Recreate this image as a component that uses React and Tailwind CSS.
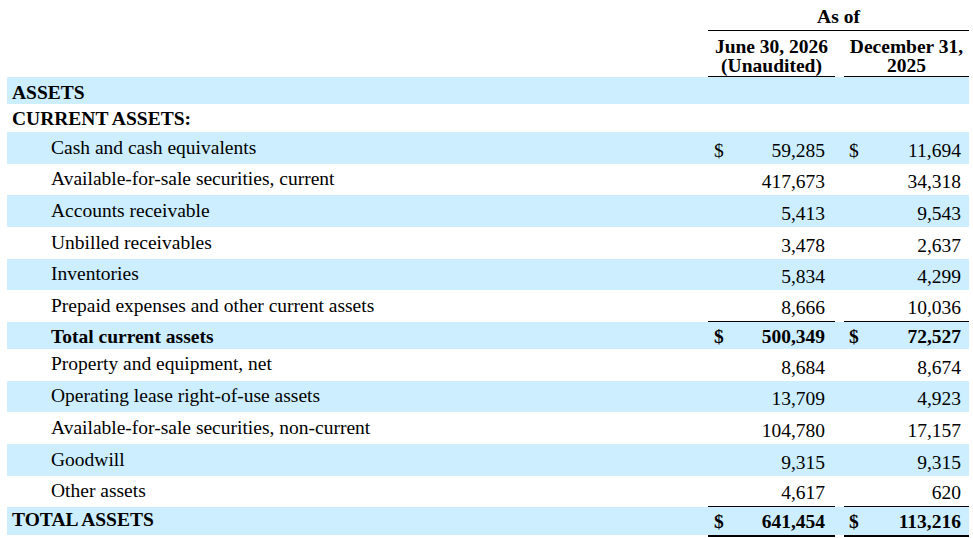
import React from 'react';

const ROWS = [
  { label: 'ASSETS', section: true, bg: true, h: 'h-[27px]', pb: 'pb-0' },
  { label: 'CURRENT ASSETS:', section: true, h: 'h-[28px]', pb: 'pb-[2px]' },
  { label: 'Cash and cash equivalents', a: '59,285', b: '11,694', dollar: true, bg: true, h: 'h-[32px]' },
  { label: 'Available-for-sale securities, current', a: '417,673', b: '34,318', h: 'h-[31px]' },
  { label: 'Accounts receivable', a: '5,413', b: '9,543', bg: true, h: 'h-[32px]' },
  { label: 'Unbilled receivables', a: '3,478', b: '2,637', h: 'h-[32px]' },
  { label: 'Inventories', a: '5,834', b: '4,299', bg: true, h: 'h-[31px]' },
  { label: 'Prepaid expenses and other current assets', a: '8,666', b: '10,036', h: 'h-[32px]', rule: true },
  { label: 'Total current assets', a: '500,349', b: '72,527', bold: true, dollar: true, bg: true, h: 'h-[27px]', pb: 'pb-[1px]', vpb: 'pb-[1px]' },
  { label: 'Property and equipment, net', a: '8,684', b: '8,674', h: 'h-[32px]', pb: 'pb-[6px]' },
  { label: 'Operating lease right-of-use assets', a: '13,709', b: '4,923', bg: true, h: 'h-[31px]' },
  { label: 'Available-for-sale securities, non-current', a: '104,780', b: '17,157', h: 'h-[32px]' },
  { label: 'Goodwill', a: '9,315', b: '9,315', bg: true, h: 'h-[32px]' },
  { label: 'Other assets', a: '4,617', b: '620', h: 'h-[31px]', rule: true },
  { label: 'TOTAL ASSETS', a: '641,454', b: '113,216', section: true, bold: true, dollar: true, bg: true, h: 'h-[28px]', pb: 'pb-[4px]' },
];

function ValueCell({ value, dollar, bold, rule, width, pl, pr, pb }) {
  return (
    <div className={`${width} flex items-end justify-between ${pl} ${pr} ${pb} ${rule ? 'border-b border-black' : ''} ${bold ? 'font-bold' : ''}`}>
      <span>{dollar ? '$' : ''}</span>
      <span>{value}</span>
    </div>
  );
}

function Row({ row }) {
  const labelPb = row.pb ?? 'pb-[5px]';
  const valuePb = row.vpb ?? 'pb-[2px]';
  return (
    <div className={`flex ${row.h} ${row.bg ? 'bg-[#cceeff]' : 'bg-white'}`}>
      <div
        className={`flex-1 flex items-end whitespace-nowrap ${labelPb} ${row.section ? 'pl-[5px]' : 'pl-[44px]'} ${row.bold || row.section ? 'font-bold' : ''}`}
      >
        {row.label}
      </div>
      {row.a !== undefined ? (
        <>
          <ValueCell value={row.a} dollar={row.dollar} bold={row.bold} rule={row.rule} width="w-[127px]" pl="pl-[6px]" pr="pr-[10px]" pb={valuePb} />
          <div className="w-[9px]" />
          <ValueCell value={row.b} dollar={row.dollar} bold={row.bold} rule={row.rule} width="w-[125px]" pl="pl-[5px]" pr="pr-[8px]" pb={valuePb} />
        </>
      ) : null}
    </div>
  );
}

export default function App() {
  return (
    <div
      className="w-[973px] h-[538px] overflow-hidden bg-white text-black text-[19.5px] leading-[22px] pl-[7px] pr-[4px]"
      style={{ fontFamily: '"Liberation Serif", "Times New Roman", serif' }}
    >
      {/* header */}
      <div className="flex">
        <div className="flex-1" />
        <div className="w-[261px] h-[31px] flex items-end justify-center pb-[2px] border-b border-black font-bold">
          As of
        </div>
      </div>
      <div className="flex h-[46px] font-bold leading-[19px]">
        <div className="flex-1" />
        <div className="w-[127px] flex flex-col items-center justify-end pb-[1px] border-b border-black text-center whitespace-nowrap">
          <span>June 30, 2026</span>
          <span>(Unaudited)</span>
        </div>
        <div className="w-[9px]" />
        <div className="w-[125px] flex flex-col items-center justify-end pb-[1px] border-b border-black text-center whitespace-nowrap">
          <span>December 31,</span>
          <span>2025</span>
        </div>
      </div>

      {ROWS.map((row) => (
        <Row key={row.label} row={row} />
      ))}

      {/* closing rule */}
      <div className="flex">
        <div className="flex-1" />
        <div className="w-[127px] h-[2px] bg-black" />
        <div className="w-[9px]" />
        <div className="w-[125px] h-[2px] bg-black" />
      </div>
    </div>
  );
}
